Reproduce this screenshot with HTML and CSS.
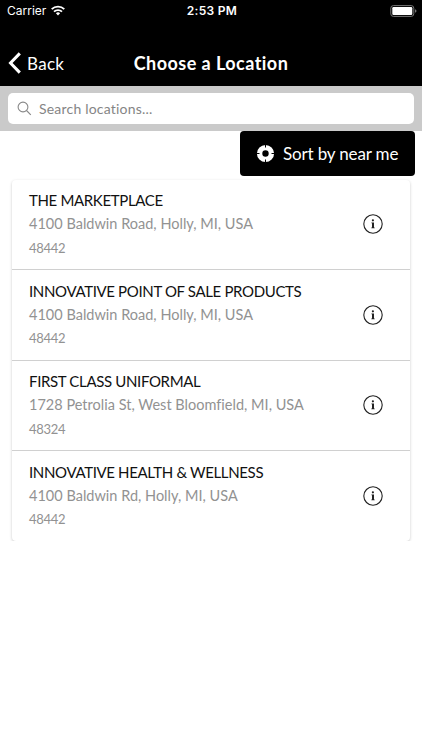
FILE: index.html
```html
<!DOCTYPE html>
<html lang="en">
<head>
    <meta charset="UTF-8">
    <meta name="viewport" content="width=device-width, initial-scale=1.0">
    <title>Choose a Location</title>
    <link rel="stylesheet" href="styles.css">
</head>
<body>
    <svg width="0" height="0" class="sprite">
        <symbol id="info" viewBox="0 0 20 20">
            <circle cx="10" cy="10" r="9.2" fill="none" stroke="#222" stroke-width="1.1"/>
            <circle cx="9.9" cy="6.3" r="1.1" fill="#222"/>
            <path d="M8.4 8.5H11v5.1h.7v.7H8.3v-.7H9V9.2h-.6z" fill="#222"/>
        </symbol>
    </svg>

    <div class="status-bar">
        <div class="carrier">
            <span>Carrier</span>
            <svg width="14" height="11" viewBox="0 0 14 11" fill="none" stroke="#fff" stroke-width="1.8">
                <path d="M.7 4.2a9 9 0 0 1 12.6 0"/>
                <path d="M3 6.7a5.7 5.7 0 0 1 8 0"/>
                <path d="M7 10.4L4.9 8.3a3 3 0 0 1 4.2 0z" fill="#fff" stroke="none"/>
            </svg>
        </div>
        <div class="time">2:53 PM</div>
        <div class="battery">
            <svg width="27" height="12" viewBox="0 0 27 12">
                <rect x=".8" y=".6" width="23" height="10.8" rx="2.6" fill="none" stroke="#777" stroke-width="1"/>
                <rect x="2.3" y="2" width="20" height="8" rx="1.2" fill="#fff"/>
                <path d="M25 4.2q1.5.5 1.5 1.8T25 7.8z" fill="#777"/>
            </svg>
        </div>
    </div>

    <div class="navbar">
        <a class="back">
            <svg width="13" height="22" viewBox="0 0 13 22" fill="none" stroke="#fff" stroke-width="3">
                <path d="M11.8 1.4L2.5 11l9.3 9.6"/>
            </svg>
            <span>Back</span>
        </a>
        <h1>Choose a Location</h1>
    </div>

    <div class="search-bar">
        <div class="search-box">
            <svg width="15" height="15" viewBox="0 0 15 15" fill="none" stroke="#888" stroke-width="1.1">
                <circle cx="6" cy="6" r="4.9"/>
                <path d="M9.5 9.5l4.3 4.3"/>
            </svg>
            <span>Search locations...</span>
        </div>
    </div>

    <div class="sort-row">
        <button class="sort">
            <svg width="19" height="19" viewBox="0 0 19 19">
                <circle cx="9.5" cy="9.5" r="5.9" fill="none" stroke="#fff" stroke-width="5.4"/>
                <path d="M9.5 .5v3M9.5 15.5v3M.5 9.5h3M15.5 9.5h3" stroke="#000" stroke-width="1"/>
            </svg>
            <span>Sort by near me</span>
        </button>
    </div>

    <div class="list">
        <div class="item">
            <div>
                <h2>THE MARKETPLACE</h2>
                <p class="address">4100 Baldwin Road, Holly, MI, USA</p>
                <p class="zip">48442</p>
            </div>
            <svg class="info"><use href="#info"/></svg>
        </div>
        <div class="item">
            <div>
                <h2>INNOVATIVE POINT OF SALE PRODUCTS</h2>
                <p class="address">4100 Baldwin Road, Holly, MI, USA</p>
                <p class="zip">48442</p>
            </div>
            <svg class="info"><use href="#info"/></svg>
        </div>
        <div class="item">
            <div>
                <h2>FIRST CLASS UNIFORMAL</h2>
                <p class="address">1728 Petrolia St, West Bloomfield, MI, USA</p>
                <p class="zip">48324</p>
            </div>
            <svg class="info"><use href="#info"/></svg>
        </div>
        <div class="item">
            <div>
                <h2>INNOVATIVE HEALTH &amp; WELLNESS</h2>
                <p class="address">4100 Baldwin Rd, Holly, MI, USA</p>
                <p class="zip">48442</p>
            </div>
            <svg class="info"><use href="#info"/></svg>
        </div>
    </div>
</body>
</html>
```

FILE: styles.css
```css
* {
    box-sizing: border-box;
}
body {
    font-family: Lato, "Open Sans", sans-serif;
    background-color: #fff;
    margin: 0;
}
h1, h2, p {
    margin: 0;
    white-space: nowrap;
}
svg {
    display: block;
    flex: none;
}
.sprite {
    display: none;
}
.status-bar {
    display: grid;
    grid-template-columns: 1fr auto 1fr;
    align-items: center;
    height: 21px;
    padding: 0 5px 0 7px;
    background-color: #000;
    color: #fff;
    font-family: Inter, sans-serif;
    font-size: 12px;
}
.carrier {
    display: flex;
    align-items: center;
    gap: 5px;
}
.time {
    font-weight: 600;
    letter-spacing: 0.3px;
}
.battery {
    justify-self: end;
}
.navbar {
    display: grid;
    grid-template-columns: 1fr auto 1fr;
    align-items: center;
    height: 65px;
    padding: 19px 8px 0;
    background-color: #000;
    color: #fff;
}
.back {
    display: flex;
    align-items: center;
    gap: 6px;
    font-size: 17px;
    letter-spacing: 0.3px;
}
.navbar h1 {
    font-size: 18px;
    font-weight: bold;
    letter-spacing: 0.45px;
}
.search-bar {
    height: 45px;
    padding: 7px 8px;
    background-color: #cacaca;
}
.search-box {
    display: flex;
    align-items: center;
    gap: 7px;
    height: 31px;
    padding-left: 9px;
    background-color: #fff;
    border-radius: 5px;
    color: #858585;
    font-size: 14px;
    letter-spacing: 0.2px;
}
.sort-row {
    display: flex;
    justify-content: flex-end;
    height: 48.5px;
    padding-right: 7px;
}
.sort {
    display: flex;
    align-items: center;
    gap: 8px;
    width: 175px;
    height: 45px;
    padding: 0 0 0 16px;
    background-color: #000;
    color: #fff;
    border: none;
    border-radius: 4px;
    font-family: inherit;
    font-size: 17px;
    letter-spacing: -0.15px;
    white-space: nowrap;
}
.list {
    margin: 0 12px;
    background-color: #fff;
    border-radius: 4px;
    box-shadow: 0 1px 3px rgba(0, 0, 0, 0.22);
}
.item {
    display: flex;
    align-items: center;
    justify-content: space-between;
    height: 90.5px;
    padding: 0 27px 0 17px;
    border-bottom: 1px solid #d0d0d0;
}
.item:last-child {
    height: 89.5px;
    border-bottom: none;
}
.item h2 {
    color: #111;
    font-size: 15px;
    font-weight: normal;
    line-height: 24px;
    letter-spacing: -0.35px;
}
.address {
    color: #929292;
    font-size: 14.5px;
    line-height: 24.5px;
    letter-spacing: 0.01px;
}
.zip {
    color: #929292;
    font-size: 13px;
    line-height: 23.5px;
    letter-spacing: -0.3px;
}
.info {
    width: 20px;
    height: 20px;
}
```
